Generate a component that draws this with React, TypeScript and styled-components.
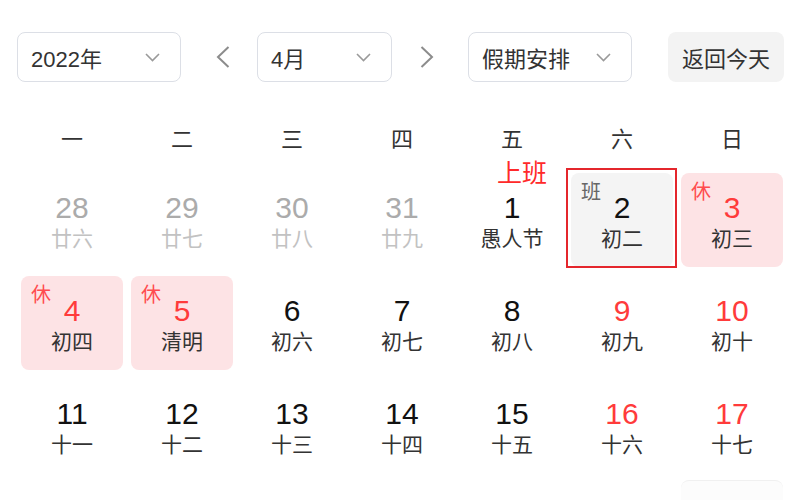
import React from "react";
import styled, { createGlobalStyle, css } from "styled-components";

const GlobalStyle = createGlobalStyle`
  html, body {
    margin: 0;
    padding: 0;
    background: #ffffff;
    overflow: hidden;
  }
  body {
    font-family: "Liberation Sans", "Noto Sans CJK SC", sans-serif;
    color: #333333;
  }
`;

const Page = styled.div`
  width: 800px;
  height: 500px;
  box-sizing: border-box;
  padding: 32px 0 0 17px;
  overflow: hidden;
`;

const Toolbar = styled.div`
  display: flex;
  align-items: center;
  height: 50px;
`;

const Select = styled.div<{ $w: number }>`
  width: ${(p) => p.$w}px;
  height: 50px;
  box-sizing: border-box;
  border: 1px solid #dcdfe6;
  border-radius: 8px;
  padding: 0 20px 0 13px;
  display: flex;
  align-items: center;
  justify-content: space-between;
  font-size: 22px;
  color: #333333;
`;

const ArrowButton = styled.div<{ $ml: number; $mr: number }>`
  width: 32px;
  height: 50px;
  margin-left: ${(p) => p.$ml}px;
  margin-right: ${(p) => p.$mr}px;
  display: flex;
  align-items: center;
  justify-content: center;
`;

const TodayButton = styled.div`
  margin-left: 36px;
  height: 50px;
  padding: 0 14px;
  display: flex;
  align-items: center;
  background: #f3f3f3;
  border-radius: 8px;
  font-size: 22px;
  color: #333333;
`;

const WeekHeader = styled.div`
  display: grid;
  grid-template-columns: repeat(7, 110px);
  margin-top: 38px;
  height: 40px;
`;

const WeekDay = styled.div`
  text-align: center;
  line-height: 40px;
  font-size: 22px;
  color: #333333;
`;

const DayGrid = styled.div`
  display: grid;
  grid-template-columns: repeat(7, 110px);
  grid-auto-rows: 103px;
  margin-top: 9px;
`;

type Kind = "plain" | "rest" | "work";

const Cell = styled.div<{ $kind: Kind; $selected?: boolean }>`
  position: relative;
  margin: 4px 4px 5px 4px;
  border-radius: 8px;
  display: flex;
  flex-direction: column;
  align-items: center;
  padding-top: 18px;
  box-sizing: border-box;
  background: ${(p) =>
    p.$kind === "rest" ? "#fde3e5" : p.$kind === "work" ? "#f4f4f4" : "transparent"};
  ${(p) =>
    p.$selected &&
    css`
      &::before {
        content: "";
        position: absolute;
        top: -5px;
        left: -5px;
        right: -4px;
        bottom: -1px;
        border: 2px solid #e4262c;
        pointer-events: none;
      }
    `}
`;

const NextRowCell = styled(Cell)`
  grid-column: 7;
  margin-top: 2px;
  background: #fcfcfc;
  border-top: 1px solid #f0f0f0;
`;

const Num = styled.div<{ $tone: "dark" | "red" | "muted" }>`
  font-size: 30px;
  line-height: 34px;
  color: ${(p) => (p.$tone === "red" ? "#ff3b3b" : p.$tone === "muted" ? "#ababab" : "#111111")};
`;

const Lunar = styled.div<{ $muted: boolean }>`
  font-size: 21px;
  line-height: 26px;
  margin-top: 1px;
  color: ${(p) => (p.$muted ? "#c2c2c2" : "#333333")};
`;

const Badge = styled.span<{ $rest: boolean }>`
  position: absolute;
  top: 9px;
  left: 10px;
  font-size: 20px;
  line-height: 20px;
  color: ${(p) => (p.$rest ? "#ff4d4f" : "#666666")};
`;

const Tip = styled.span`
  position: absolute;
  top: -13px;
  left: 50%;
  transform: translateX(-50%);
  margin-left: 10px;
  font-size: 25px;
  line-height: 26px;
  color: #ff2a2a;
  white-space: nowrap;
`;

const Chevron = () => (
  <svg width="15" height="9" viewBox="0 0 15 9">
    <path d="M1 1 L7.5 7.5 L14 1" stroke="#9a9a9a" strokeWidth="1.6" fill="none" />
  </svg>
);

const Arrow = ({ dir }: { dir: "left" | "right" }) => (
  <svg width="14" height="22" viewBox="0 0 14 22">
    <path
      d={dir === "left" ? "M12.5 1 L2 11 L12.5 21" : "M1.5 1 L12 11 L1.5 21"}
      stroke="#8c8c8c"
      strokeWidth="2"
      fill="none"
    />
  </svg>
);

type Day = {
  n: number;
  lunar: string;
  tone?: "dark" | "red" | "muted";
  kind?: Kind;
  badge?: "休" | "班";
  selected?: boolean;
  tip?: string;
};

const days: Day[] = [
  { n: 28, lunar: "廿六", tone: "muted" },
  { n: 29, lunar: "廿七", tone: "muted" },
  { n: 30, lunar: "廿八", tone: "muted" },
  { n: 31, lunar: "廿九", tone: "muted" },
  { n: 1, lunar: "愚人节", tip: "上班" },
  { n: 2, lunar: "初二", kind: "work", badge: "班", selected: true },
  { n: 3, lunar: "初三", tone: "red", kind: "rest", badge: "休" },
  { n: 4, lunar: "初四", tone: "red", kind: "rest", badge: "休" },
  { n: 5, lunar: "清明", tone: "red", kind: "rest", badge: "休" },
  { n: 6, lunar: "初六" },
  { n: 7, lunar: "初七" },
  { n: 8, lunar: "初八" },
  { n: 9, lunar: "初九", tone: "red" },
  { n: 10, lunar: "初十", tone: "red" },
  { n: 11, lunar: "十一" },
  { n: 12, lunar: "十二" },
  { n: 13, lunar: "十三" },
  { n: 14, lunar: "十四" },
  { n: 15, lunar: "十五" },
  { n: 16, lunar: "十六", tone: "red" },
  { n: 17, lunar: "十七", tone: "red" },
];

const weekNames = ["一", "二", "三", "四", "五", "六", "日"];

export default function App() {
  return (
    <>
      <GlobalStyle />
      <Page>
        <Toolbar>
          <Select $w={164}>
            <span>2022年</span>
            <Chevron />
          </Select>
          <ArrowButton $ml={26} $mr={18}>
            <Arrow dir="left" />
          </ArrowButton>
          <Select $w={135}>
            <span>4月</span>
            <Chevron />
          </Select>
          <ArrowButton $ml={19} $mr={25}>
            <Arrow dir="right" />
          </ArrowButton>
          <Select $w={164}>
            <span>假期安排</span>
            <Chevron />
          </Select>
          <TodayButton>返回今天</TodayButton>
        </Toolbar>
        <WeekHeader>
          {weekNames.map((w) => (
            <WeekDay key={w}>{w}</WeekDay>
          ))}
        </WeekHeader>
        <DayGrid>
          {days.map((d, i) => (
            <Cell key={i} $kind={d.kind ?? "plain"} $selected={!!d.selected}>
              {d.badge && <Badge $rest={d.badge === "休"}>{d.badge}</Badge>}
              {d.tip && <Tip>{d.tip}</Tip>}
              <Num $tone={d.tone ?? "dark"}>{d.n}</Num>
              <Lunar $muted={d.tone === "muted"}>{d.lunar}</Lunar>
            </Cell>
          ))}
          <NextRowCell $kind="work" />
        </DayGrid>
      </Page>
    </>
  );
}
